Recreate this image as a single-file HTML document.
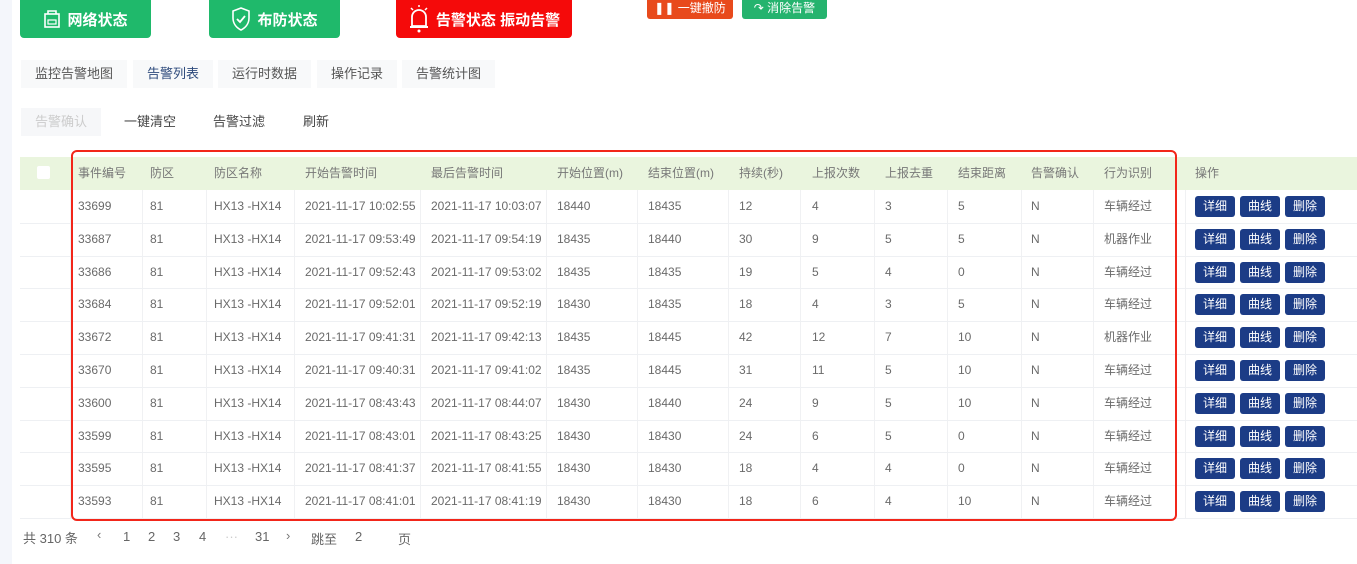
<!DOCTYPE html><html><head><meta charset="utf-8"><style>
body{margin:0;width:1357px;height:564px;background:#fff;position:relative;overflow:hidden;font-family:"Liberation Sans","Noto Sans CJK SC",sans-serif;color:#555;font-size:12px}
.a{position:absolute}
.btn{position:absolute;color:#fff;font-weight:bold;font-size:15px;border-radius:0 0 4px 4px;display:flex;align-items:center;justify-content:center;gap:6px}
.tab{position:absolute;top:60px;height:28px;line-height:28px;font-size:13px;color:#555;background:#f8f9fa;padding:0 14px}
.sub{position:absolute;top:108px;height:28px;line-height:28px;font-size:13px;color:#444}
.hd{position:absolute;top:157px;height:33px;background:#eaf5de;left:20px;width:1337px}
.c{position:absolute;line-height:32.8px;font-size:12px;color:#6a6a6a}
.h{color:#777}
.row{position:absolute;left:20px;width:1337px;height:32.8px;border-bottom:1px solid #eef0f3}
.vl{position:absolute;top:190px;height:328px;width:1px;background:#f0f1f3}
.ob{position:absolute;width:40px;height:21px;background:#1c3c86;color:#fff;font-size:12px;text-align:center;line-height:21px;border-radius:3px}
</style></head><body>
<div class="a" style="left:0;top:0;width:12px;height:564px;background:#f4f6fb"></div>
<div class="btn" style="left:20px;top:0;width:131px;height:38px;background:#1fb96b"><svg width="18" height="20" viewBox="0 0 18 20"><rect x="2" y="5" width="14" height="13" fill="none" stroke="#fff" stroke-width="1.6"/><path d="M5 5V2h8v3" fill="none" stroke="#fff" stroke-width="1.6"/><rect x="5" y="11" width="8" height="4" fill="none" stroke="#fff" stroke-width="1.2"/></svg>网络状态</div>
<div class="btn" style="left:209px;top:0;width:131px;height:38px;background:#1fb96b"><svg width="20" height="24" viewBox="0 0 20 24"><path d="M10 1L2 4v7c0 6 4 10 8 12 4-2 8-6 8-12V4z" fill="none" stroke="#fff" stroke-width="1.6"/><path d="M6 12l3 3 5-6" fill="none" stroke="#fff" stroke-width="1.8"/></svg>布防状态</div>
<div class="btn" style="left:396px;top:0;width:176px;height:38px;background:#f50a0a"><svg width="22" height="28" viewBox="0 0 22 28"><path d="M4 21V12a7 7 0 0 1 14 0v9z" fill="none" stroke="#fff" stroke-width="1.8"/><path d="M2 22h18" stroke="#fff" stroke-width="2"/><circle cx="11" cy="26" r="1.5" fill="#fff"/><path d="M3 3l2 2M19 3l-2 2M11 0v2" stroke="#fff" stroke-width="1.5"/></svg>告警状态 振动告警</div>
<div class="a" style="left:647px;top:0;width:86px;height:19px;background:#e84a1c;color:#fff;font-size:12px;line-height:17px;text-align:center;border-radius:0 0 3px 3px">❚❚ 一键撤防</div>
<div class="a" style="left:742px;top:0;width:85px;height:19px;background:#25b36e;color:#fff;font-size:12px;line-height:17px;text-align:center;border-radius:0 0 3px 3px">↷ 消除告警</div>
<div class="tab" style="left:21px">监控告警地图</div>
<div class="tab" style="left:133px;color:#2d4a7c">告警列表</div>
<div class="tab" style="left:218px">运行时数据</div>
<div class="tab" style="left:317px">操作记录</div>
<div class="tab" style="left:402px">告警统计图</div>
<div class="sub" style="left:21px;padding:0 14px;background:#f6f7f9;color:#ccc">告警确认</div>
<div class="sub" style="left:124px">一键清空</div>
<div class="sub" style="left:213px">告警过滤</div>
<div class="sub" style="left:303px">刷新</div>
<div class="hd"></div>
<div class="a" style="left:37px;top:166px;width:13px;height:13px;background:#fff;border-radius:2px"></div>
<div id="t"></div>
<div class="a" style="left:71px;top:150px;width:1102px;height:367px;border:2px solid #f2261a;border-radius:6px"></div>
<div class="a" style="left:23px;top:528px;font-size:13px;color:#666">共 310 条</div>
<div class="a" style="left:97px;top:527px;font-size:13px;color:#777">‹</div>
<div class="a" style="left:123px;top:529px;font-size:13px;color:#666">1</div>
<div class="a" style="left:148px;top:529px;font-size:13px;color:#666">2</div>
<div class="a" style="left:173px;top:529px;font-size:13px;color:#666">3</div>
<div class="a" style="left:199px;top:529px;font-size:13px;color:#666">4</div>
<div class="a" style="left:225px;top:529px;font-size:13px;color:#ccc">···</div>
<div class="a" style="left:255px;top:529px;font-size:13px;color:#666">31</div>
<div class="a" style="left:286px;top:528px;font-size:13px;color:#777">›</div>
<div class="a" style="left:311px;top:529px;font-size:13px;color:#666">跳至</div>
<div class="a" style="left:355px;top:529px;font-size:13px;color:#666">2</div>
<div class="a" style="left:398px;top:529px;font-size:13px;color:#666">页</div>
<script>
var cols=[78,150,214,305,431,557,648,739,812,885,958,1031,1104];
var vls=[70,142,206,294,420,546,637,728,800,874,947,1021,1093,1185];
var hd=["事件编号","防区","防区名称","开始告警时间","最后告警时间","开始位置(m)","结束位置(m)","持续(秒)","上报次数","上报去重","结束距离","告警确认","行为识别"];
var d=[["33699","10:02:55","10:03:07","18440","18435","12","4","3","5","车辆经过"],
["33687","09:53:49","09:54:19","18435","18440","30","9","5","5","机器作业"],
["33686","09:52:43","09:53:02","18435","18435","19","5","4","0","车辆经过"],
["33684","09:52:01","09:52:19","18430","18435","18","4","3","5","车辆经过"],
["33672","09:41:31","09:42:13","18435","18445","42","12","7","10","机器作业"],
["33670","09:40:31","09:41:02","18435","18445","31","11","5","10","车辆经过"],
["33600","08:43:43","08:44:07","18430","18440","24","9","5","10","车辆经过"],
["33599","08:43:01","08:43:25","18430","18430","24","6","5","0","车辆经过"],
["33595","08:41:37","08:41:55","18430","18430","18","4","4","0","车辆经过"],
["33593","08:41:01","08:41:19","18430","18430","18","6","4","10","车辆经过"]];
var h="";
for(var i=0;i<hd.length;i++)h+='<div class="c h" style="left:'+cols[i]+'px;top:157px">'+hd[i]+'</div>';
h+='<div class="c h" style="left:1195px;top:157px">操作</div>';
for(var j=0;j<vls.length;j++)h+='<div class="vl" style="left:'+vls[j]+'px"></div>';
for(var r=0;r<10;r++){var y=190+r*32.8,x=d[r];
h+='<div class="row" style="top:'+y+'px"></div>';
var v=[x[0],"81","HX13 -HX14","2021-11-17 "+x[1],"2021-11-17 "+x[2],x[3],x[4],x[5],x[6],x[7],x[8],"N",x[9]];
for(var i=0;i<13;i++)h+='<div class="c" style="left:'+cols[i]+'px;top:'+y+'px">'+v[i]+'</div>';
var by=y+6;
h+='<div class="ob" style="left:1195px;top:'+by+'px">详细</div><div class="ob" style="left:1240px;top:'+by+'px">曲线</div><div class="ob" style="left:1285px;top:'+by+'px">删除</div>';}
document.getElementById("t").innerHTML=h;
</script>
</body></html>
